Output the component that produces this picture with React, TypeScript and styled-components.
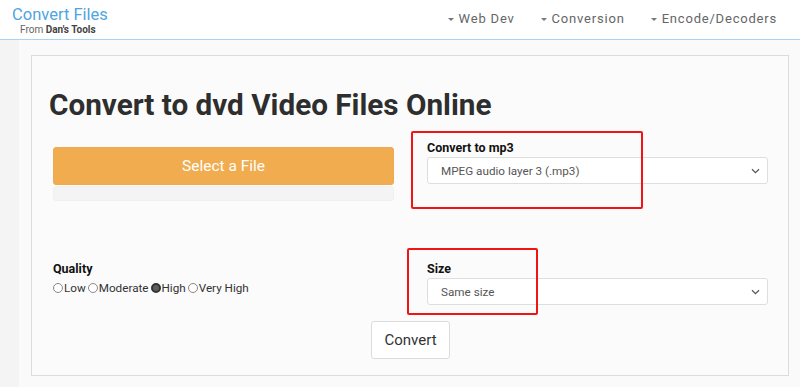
import { useState } from 'react';
import styled, { createGlobalStyle } from 'styled-components';

const GlobalStyle = createGlobalStyle`
  html, body {
    margin: 0;
    padding: 0;
    background: #f4f4f4;
    font-family: Roboto, "Liberation Sans", Arial, sans-serif;
    color: #333;
  }
`;

const Header = styled.header`
  display: flex;
  align-items: flex-start;
  justify-content: space-between;
  height: 40px;
  background: #fff;
  border-bottom: 1px solid #a9d3f2;
  box-sizing: border-box;
`;

const Brand = styled.div`
  display: flex;
  flex-direction: column;
  padding: 5px 0 0 12px;
`;

const BrandTitle = styled.div`
  font-size: 16.5px;
  line-height: 19px;
  color: #4ea5e0;
`;

const BrandSub = styled.div`
  margin: 0 0 0 8px;
  font-size: 10px;
  line-height: 12px;
  color: #666;

  b {
    color: #444;
  }
`;

const Nav = styled.nav`
  display: flex;
  gap: 26px;
  padding: 11px 23px 0 0;
`;

const NavItem = styled.span`
  display: flex;
  align-items: center;
  gap: 5px;
  font-size: 13px;
  letter-spacing: 0.8px;
  color: #666;
`;

const Caret = styled.span`
  width: 0;
  height: 0;
  border-left: 3px solid transparent;
  border-right: 3px solid transparent;
  border-top: 3px solid #777;
  margin-top: 1px;
`;

const Page = styled.div`
  padding-left: 19px;
`;

const Container = styled.div`
  background: #fafafa;
  padding: 15px 11px 12px 12px;
`;

const Panel = styled.section`
  background: #fbfbfb;
  border: 1px solid #dcdcdc;
  padding: 0 20px 16px 21px;
`;

const Title = styled.h1`
  margin: 31px 0 0 -4px;
  font-size: 29.7px;
  line-height: 36px;
  font-weight: 700;
  color: #2e2e2e;
`;

const Row = styled.div<{ $top: number }>`
  display: grid;
  grid-template-columns: 1fr 1fr;
  column-gap: 33px;
  margin-top: ${({ $top }) => $top}px;
`;

const Field = styled.div`
  position: relative;
  display: flex;
  flex-direction: column;
`;

const Highlight = styled.div<{ $l: number; $t: number; $w: number; $h: number }>`
  position: absolute;
  left: ${({ $l }) => $l}px;
  top: ${({ $t }) => $t}px;
  width: ${({ $w }) => $w}px;
  height: ${({ $h }) => $h}px;
  border: 2px solid #f01414;
  border-radius: 2px;
  box-sizing: border-box;
  pointer-events: none;
`;

const Label = styled.div`
  font-size: 12.5px;
  line-height: 14px;
  font-weight: 700;
  color: #111;
  margin-bottom: 2px;
`;

const SelectBox = styled.div`
  display: flex;
  align-items: center;
  justify-content: space-between;
  height: 27px;
  padding: 0 7px 0 13px;
  background: #fff;
  border: 1px solid #dedede;
  border-radius: 3px;
  box-sizing: border-box;
  font-size: 11.7px;
  color: #555;
`;

const UploadButton = styled.button`
  margin-top: 6px;
  height: 38px;
  border: 1px solid #eeaa4c;
  border-radius: 3px;
  background: #f0ac4e;
  color: #fff;
  font-family: Roboto, sans-serif;
  font-size: 15.5px;
  cursor: pointer;
`;

const Progress = styled.div`
  height: 15px;
  margin-top: 1px;
  background: #f4f4f4;
  border: 1px solid #f0f0f0;
  border-radius: 3px;
  box-sizing: border-box;
`;

const Radios = styled.div`
  display: flex;
  align-items: center;
  gap: 2px;
  margin-top: 3px;
  font-size: 11.7px;
  color: #333;
`;

const RadioOption = styled.label`
  display: flex;
  align-items: center;
  gap: 1px;
  cursor: pointer;
`;

const RadioDot = styled.span<{ $on: boolean }>`
  width: 10px;
  height: 10px;
  border-radius: 50%;
  box-sizing: border-box;
  border: ${({ $on }) => ($on ? '2px solid #333' : '1px solid #888')};
  background: ${({ $on }) => ($on ? '#5e5e5e' : '#fff')};
`;

const Actions = styled.div`
  display: flex;
  justify-content: center;
  margin-top: 16px;
`;

const ConvertButton = styled.button`
  width: 79px;
  height: 38px;
  background: #fff;
  border: 1px solid #dcdcdc;
  border-radius: 3px;
  font-family: Roboto, sans-serif;
  font-size: 15px;
  color: #333;
  cursor: pointer;
`;

const Chevron = () => (
  <svg width="9" height="6" viewBox="0 0 9 6">
    <path d="M1 1.2 4.5 4.6 8 1.2" fill="none" stroke="#555" strokeWidth="1.2" />
  </svg>
);

const qualities = ['Low', 'Moderate', 'High', 'Very High'];

export default function App() {
  const [quality, setQuality] = useState('High');

  return (
    <>
      <GlobalStyle />
      <Header>
        <Brand>
          <BrandTitle>Convert Files</BrandTitle>
          <BrandSub>
            From <b>Dan's Tools</b>
          </BrandSub>
        </Brand>
        <Nav>
          {['Web Dev', 'Conversion', 'Encode/Decoders'].map((item) => (
            <NavItem key={item}>
              <Caret />
              {item}
            </NavItem>
          ))}
        </Nav>
      </Header>
      <Page>
        <Container>
          <Panel>
            <Title>Convert to dvd Video Files Online</Title>
            <Row $top={18}>
              <Field>
                <UploadButton>Select a File</UploadButton>
                <Progress />
              </Field>
              <Field>
                <Highlight $l={-16} $t={-10} $w={232} $h={78} />
                <Label>Convert to mp3</Label>
                <SelectBox>
                  MPEG audio layer 3 (.mp3)
                  <Chevron />
                </SelectBox>
              </Field>
            </Row>
            <Row $top={61}>
              <Field>
                <Label>Quality</Label>
                <Radios>
                  {qualities.map((q) => (
                    <RadioOption key={q} onClick={() => setQuality(q)}>
                      <RadioDot $on={quality === q} />
                      {q}
                    </RadioOption>
                  ))}
                </Radios>
              </Field>
              <Field>
                <Highlight $l={-20} $t={-14} $w={131} $h={67} />
                <Label>Size</Label>
                <SelectBox>
                  Same size
                  <Chevron />
                </SelectBox>
              </Field>
            </Row>
            <Actions>
              <ConvertButton>Convert</ConvertButton>
            </Actions>
          </Panel>
        </Container>
      </Page>
    </>
  );
}
